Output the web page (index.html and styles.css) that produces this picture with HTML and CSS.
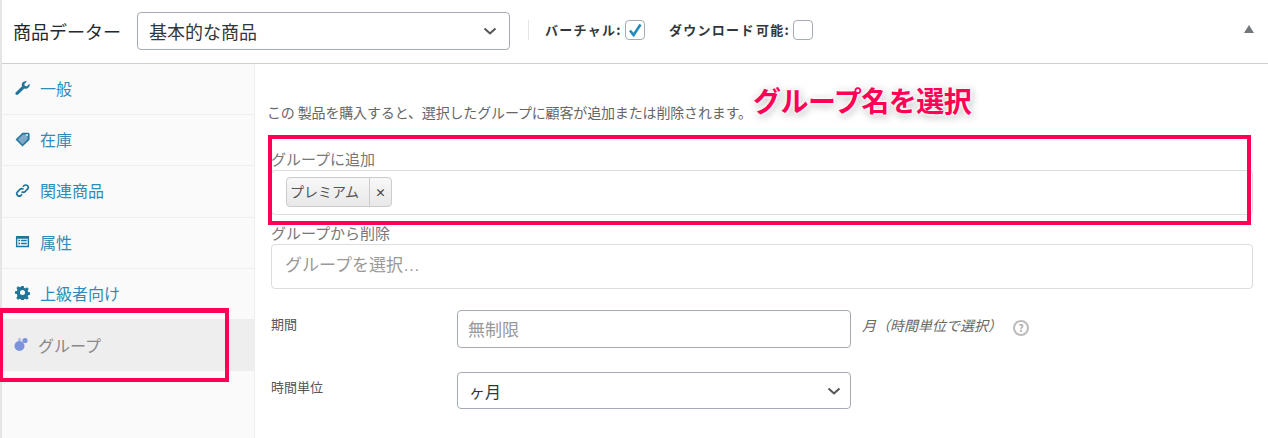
FILE: index.html
```html
<!DOCTYPE html>
<html lang="ja">
<head>
<meta charset="utf-8">
<title>商品データー</title>
<link rel="stylesheet" href="styles.css">
</head>
<body>
<div class="panel">
  <header class="head">
    <h2 class="title">商品データー</h2>
    <div class="select type-select"><span>基本的な商品</span><svg class="chev" viewBox="0 0 14 8"><path d="M1.500 1.500 7 6.500l5.500-5"/></svg></div>
    <span class="sep"></span>
    <label class="opt">バーチャル:<span class="check"><svg viewBox="0 0 18 18"><path d="M4 9.500 7.600 14 14.500 3.500"/></svg></span></label>
    <label class="opt opt-dl">ダウンロード 可能:<span class="check"></span></label>
    <span class="toggle"></span>
  </header>
  <div class="body">
    <nav class="tabs">
      <a class="tab">
        <svg class="ico" viewBox="0 0 16 16"><path d="M15.500 3 12.600 5.700 10.500 5.200 10 3.200 12.800.6C10.700-.2 8.400.6 7.600 2.400c-.5 1-.5 2.100-.1 3.100L1 12c-.8.800-.8 1.800-.1 2.500.7.700 1.700.7 2.400 0L9.900 8.100c1 .4 2.100.4 3.100-.1 1.900-.9 3.100-3 2.500-5z"/></svg>
        一般</a>
      <a class="tab">
        <svg class="ico" viewBox="0 0 16 16"><path d="M8 .8h6.500l1 1v6.400L8 15.400.6 8z"/><path class="hl" d="M8.300 2.600l5-.3.300 5.200L8 13.200 2.900 8z"/><circle class="hole" cx="12.800" cy="3.200" r="1.100"/></svg>
        在庫</a>
      <a class="tab">
        <svg class="ico line" viewBox="0 0 16 16"><path d="M7 9.200a2.600 2.600 0 0 0 3.700 0l2.600-2.600a2.600 2.600 0 0 0-3.700-3.700L8.400 4"/><path d="M9 6.800a2.600 2.600 0 0 0-3.700 0l-2.600 2.600a2.600 2.600 0 0 0 3.700 3.700L7.600 12"/></svg>
        関連商品</a>
      <a class="tab">
        <svg class="ico" viewBox="0 0 16 16"><path fill-rule="evenodd" d="M1 2h14v12H1zM2.500 5v7.500h11V5zM3.500 6.200h2v1.600h-2zM6.500 6.200h6v1.600h-6zM3.500 9.200h2v1.600h-2zM6.500 9.200h6v1.600h-6z"/></svg>
        属性</a>
      <a class="tab">
        <svg class="ico" viewBox="0 0 16 16"><path fill-rule="evenodd" d="M6.700 1h2.600l.4 2 1.300.6 1.800-1.100 1.800 1.800-1.100 1.800.6 1.300 2 .4v2.600l-2 .4-.6 1.300 1.100 1.800-1.800 1.800-1.800-1.100-1.300.6-.4 2H6.700l-.4-2-1.300-.6-1.800 1.100-1.800-1.800 1.100-1.800L2 9.700l-2-.4V6.700l2-.4.600-1.300L1.500 3.200l1.800-1.800L5.100 2.500l1.300-.6zM8 5.300a2.700 2.700 0 1 0 0 5.400 2.700 2.700 0 0 0 0-5.400z"/></svg>
        上級者向け</a>
      <a class="tab active">
        <svg class="ico dots" viewBox="0 0 15 15"><circle cx="5.500" cy="9" r="5"/><circle cx="11" cy="3.500" r="2.600"/><circle class="faint" cx="5.500" cy="2.500" r="1.500"/></svg>
        グループ</a>
    </nav>
    <main class="content">
      <p class="lead">この 製品を購入すると、選択したグループに顧客が追加または削除されます。</p>
      <div class="field">
        <label class="field-label">グループに追加</label>
        <div class="multi">
          <span class="token"><span class="token-text">プレミアム</span><span class="token-x">×</span></span>
        </div>
      </div>
      <div class="field second">
        <label class="field-label">グループから削除</label>
        <div class="multi placeholder">グループを選択…</div>
      </div>
      <div class="row row-period">
        <label class="row-label">期間</label>
        <div class="input">無制限</div>
        <em class="unit">月（時間単位で選択）</em>
        <span class="help">?</span>
      </div>
      <div class="row row-unit">
        <label class="row-label">時間単位</label>
        <div class="select unit-select"><span>ヶ月</span><svg class="chev" viewBox="0 0 14 8"><path d="M1.500 1.500 7 6.500l5.500-5"/></svg></div>
      </div>
    </main>
  </div>
  <span class="mark mark-tab"></span>
  <span class="mark mark-field"></span>
  <span class="callout">グループ名を選択</span>
</div>
</body>
</html>
```
FILE: styles.css
```css
* { box-sizing: border-box; }
html, body { margin: 0; padding: 0; background: #fff; }
body {
  width: 1268px;
  height: 438px;
  overflow: hidden;
  font-family: "Noto Sans CJK JP", "Noto Sans", sans-serif;
  font-size: 13px;
  color: #555;
}
.panel {
  position: relative;
  height: 438px;
  border-left: 2px solid #e5e5e5;
}
.head {
  height: 64px;
  border-bottom: 1px solid #ccd0d4;
  display: flex;
  align-items: center;
  padding: 0 0 2px 11px;
}
.title {
  margin: 0 12px 0 0;
  font-size: 18px;
  font-weight: 400;
  color: #23282d;
  width: 112px;
  white-space: nowrap;
}
.select {
  display: flex;
  align-items: center;
  justify-content: space-between;
  background: #fff;
  border: 1px solid #a4abb3;
  border-radius: 4px;
  color: #32373c;
}
.type-select {
  width: 373px;
  height: 38px;
  padding: 0 12px 0 11px;
  font-size: 18px;
  margin-right: 18px;
}
.chev { width: 14px; height: 8px; flex: none; }
.chev path { fill: none; stroke: #555; stroke-width: 2; }
.sep { width: 1px; height: 20px; background: #e5e5e5; margin-right: 16px; margin-bottom: 2px; }
.opt {
  display: flex;
  align-items: center;
  gap: 3px;
  font-size: 13px;
  letter-spacing: 1.300px;
  word-spacing: -3px;
  font-weight: 700;
  color: #32373c;
  white-space: nowrap;
  margin-bottom: 2px;
}
.opt-dl { margin-left: 24px; }
.check {
  width: 20px;
  height: 20px;
  border: 1px solid #a4abb3;
  border-radius: 4px;
  background: #fff;
  display: block;
}
.check svg { display: block; width: 18px; height: 18px; }
.check path { fill: none; stroke: #1e8cbe; stroke-width: 2.600; }
.toggle {
  margin-left: auto;
  margin-right: 14px;
  margin-bottom: 4px;
  width: 0;
  height: 0;
  border-left: 5px solid transparent;
  border-right: 5px solid transparent;
  border-bottom: 8px solid #72777c;
}
.body { display: flex; height: 374px; }
.tabs {
  width: 253px;
  flex: none;
  background: #fafafa;
  border-right: 1px solid #eee;
  display: flex;
  flex-direction: column;
}
.tab {
  height: 51.200px;
  display: flex;
  align-items: center;
  padding: 0 0 2px 13px;
  gap: 10px;
  color: #2e8bb8;
  font-size: 16px;
  border-bottom: 1px solid #eee;
}
.tab.active {
  background: #eee;
  color: #888;
  border-bottom: 0;
  padding-left: 12px;
  gap: 9px;
}
.ico { width: 15px; height: 15px; fill: #21759b; flex: none; }
.ico .hl { fill: #7fa8c9; }
.ico .hole { fill: #e8eef3; }
.ico.line { fill: none; stroke: #21759b; stroke-width: 1.800; }
.ico.dots { fill: #7b93da; }
.ico .faint { fill: #a9b9e6; }
.content { flex: 1; padding: 38px 0 0 16px; min-width: 0; }
.lead { margin: 0 0 0 -4px; height: 20px; line-height: 20px; font-size: 14px; letter-spacing: -.15px; color: #666; white-space: nowrap; }
.field { width: 982px; margin-top: 27px; }
.second { margin-top: 8px; }
.field-label { display: block; height: 21px; line-height: 20px; font-size: 15px; color: #777; }
.multi {
  height: 45px;
  border: 1px solid #ddd;
  border-radius: 4px;
  background: #fff;
  padding: 6px 14px;
}
.multi.placeholder {
  color: #999;
  font-family: "Liberation Sans", "Noto Sans CJK JP", sans-serif;
  font-size: 17px;
  line-height: 30px;
  padding: 6px 13px;
}
.token {
  display: inline-flex;
  height: 30px;
  border: 1px solid #ccc;
  border-radius: 4px;
  background: linear-gradient(#f8f8f8, #e8e8e8);
  color: #555;
  font-size: 14px;
  align-items: center;
}
.token-text { padding: 0 10px 0 3px; height: 100%; line-height: 27px; border-right: 1px solid #ccc; }
.token-x { width: 21px; text-align: center; font-weight: 700; font-size: 11px; color: #444; }
.row { display: flex; align-items: center; position: relative; }
.row-period { margin-top: 21px; }
.row-unit { margin-top: 24px; }
.row-label { width: 186px; font-size: 13px; color: #555; padding-bottom: 8px; flex: none; }
.row-period .row-label { padding-bottom: 11px; }
.input {
  width: 394px;
  height: 38px;
  border: 1px solid #a4abb3;
  border-radius: 4px;
  padding: 0 10px;
  line-height: 36px;
  color: #999;
  font-size: 17px;
}
.unit { margin-left: 11px; font-size: 14px; color: #666; font-style: italic; padding-bottom: 8px; }
.help {
  margin-left: 11px;
  width: 16px;
  height: 16px;
  border: 2px solid #bbb;
  border-radius: 50%;
  color: #aaa;
  font-size: 10px;
  font-weight: 700;
  line-height: 12px;
  text-align: center;
  margin-bottom: 2px;
}
.unit-select {
  width: 394px;
  height: 37px;
  padding: 0 9px 0 11px;
  font-size: 16px;
}
.mark { position: absolute; border: 4px solid #ff0055; pointer-events: none; }
.mark-tab { left: 0; top: 308px; width: 229px; height: 74px; margin-left: -2px; border-width: 5px 4px 4px 3px; }
.mark-field { left: 266px; top: 135px; width: 983px; height: 90px; }
.callout {
  position: absolute;
  left: 751px;
  top: 80px;
  font-size: 28px;
  font-weight: 700;
  color: #ff0055;
  letter-spacing: -.5px;
  white-space: nowrap;
  text-shadow: 0 0 2px #fff, 0 0 4px #fff, 0 0 4px #fff, 1px 2px 8px rgba(0,0,0,.4);
}
```
